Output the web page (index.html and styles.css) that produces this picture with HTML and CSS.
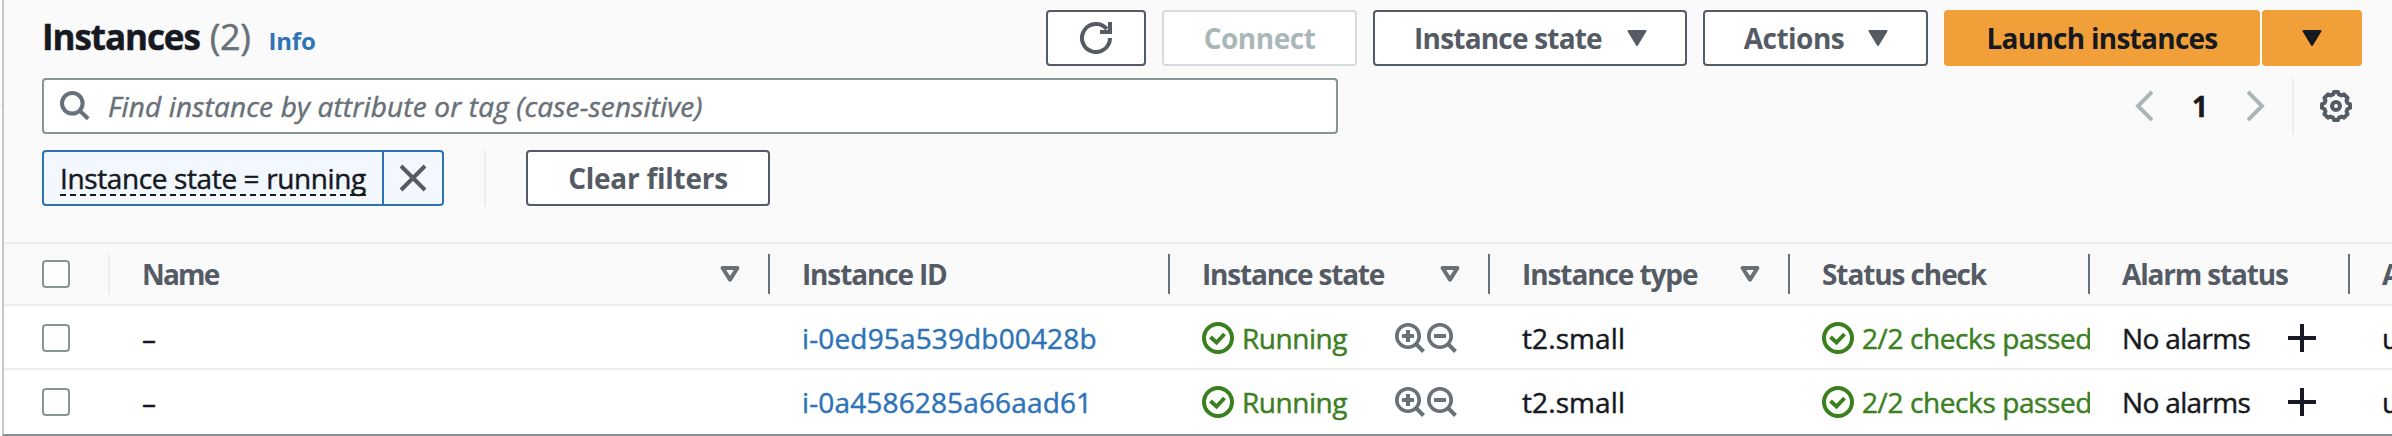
FILE: index.html
```html
<!DOCTYPE html>
<html lang="en">
<head>
<meta charset="utf-8">
<title>Instances</title>
<link rel="stylesheet" href="styles.css">
</head>
<body>
<svg class="sprite" aria-hidden="true">
  <symbol id="i-caret" viewBox="0 0 20 16"><path d="M1.5 1h17L10 15z" fill="currentColor" stroke="currentColor" stroke-width="2" stroke-linejoin="round"/></symbol>
  <symbol id="i-sort" viewBox="0 0 20 16"><path d="M2.6 2h14.8L10 13.6z" fill="none" stroke="currentColor" stroke-width="4" stroke-linejoin="round"/></symbol>
  <symbol id="i-ok" viewBox="0 0 32 32"><circle cx="16" cy="16" r="14" fill="none" stroke="currentColor" stroke-width="4"/><path d="M8.5 15l6 5.5L22.5 12" fill="none" stroke="currentColor" stroke-width="4"/></symbol>
  <symbol id="i-zoom-in" viewBox="0 0 30 30"><circle cx="13" cy="13" r="11.2" fill="none" stroke="currentColor" stroke-width="3.6"/><path d="M20.5 20.5l8 8M7 13h12M13 7v12" fill="none" stroke="currentColor" stroke-width="4"/></symbol>
  <symbol id="i-zoom-out" viewBox="0 0 30 30"><circle cx="13" cy="13" r="11.2" fill="none" stroke="currentColor" stroke-width="3.6"/><path d="M20.5 20.5l8 8M7 13h12" fill="none" stroke="currentColor" stroke-width="4"/></symbol>
  <symbol id="i-plus" viewBox="0 0 28 28"><path d="M14 0v28M0 14h28" stroke="currentColor" stroke-width="4"/></symbol>
</svg>
<div class="page">
  <section class="panel">
    <header class="header">
      <h1 class="title">Instances</h1><span class="count">(2)</span><a class="info">Info</a>
      <div class="actions">
        <button class="btn btn-refresh"><svg width="32" height="32" viewBox="0 0 32 32" fill="none" stroke="currentColor" stroke-width="4"><path d="M30 16a14 14 0 1 1-3.200-8.900M30 0v10H20"/></svg></button>
        <button class="btn btn-connect" disabled>Connect</button>
        <button class="btn btn-state"><span>Instance state</span><svg class="caret"><use href="#i-caret"/></svg></button>
        <button class="btn btn-actions"><span>Actions</span><svg class="caret"><use href="#i-caret"/></svg></button>
        <div class="split">
          <button class="btn btn-primary btn-launch">Launch instances</button>
          <button class="btn btn-primary btn-more"><svg class="caret"><use href="#i-caret"/></svg></button>
        </div>
      </div>
    </header>
    <div class="tools">
      <div class="search">
        <svg width="30" height="30" viewBox="0 0 30 30" fill="none" stroke="currentColor" stroke-width="4"><circle cx="12.3" cy="12.3" r="10.3"/><path d="M19.500 19.500l8.700 8.200"/></svg>
        <span class="placeholder">Find instance by attribute or tag (case-sensitive)</span>
      </div>
      <div class="pager">
        <svg width="18" height="32" viewBox="0 0 18 32" fill="none" stroke="currentColor" stroke-width="4"><path d="M17 2L3 16l14 14"/></svg>
        <span class="page-no">1</span>
        <svg width="18" height="32" viewBox="0 0 18 32" fill="none" stroke="currentColor" stroke-width="4"><path d="M1 2l14 14L1 30"/></svg>
      </div>
      <div class="prefs">
        <svg width="32" height="32" viewBox="0 0 32 32" fill="none" stroke="currentColor"><path stroke-width="4" stroke-linejoin="round" d="M14 2h4l1 2.500 2.500 1L24 4.400 27.600 8l-1.100 2.500 1 2.500 2.500 1v4l-2.500 1-1 2.500 1.100 2.500-3.600 3.600-2.500-1.100-2.500 1-1 2.500h-4l-1-2.500-2.500-1L8 27.600 4.400 24l1.100-2.500-1-2.500L2 18v-4l2.500-1 1-2.500L4.400 8 8 4.400l2.500 1.100 2.500-1z"/><circle cx="16" cy="16" r="4" stroke-width="4"/></svg>
      </div>
    </div>
    <div class="filters">
      <div class="token">
        <div class="token-text"><span>Instance state = running</span></div>
        <div class="token-x"><svg width="28" height="28" viewBox="0 0 28 28" fill="none" stroke="currentColor" stroke-width="4"><path d="M2 2l24 24M26 2L2 26"/></svg></div>
      </div>
      <div class="rule"></div>
      <button class="btn btn-clear">Clear filters</button>
    </div>
    <div class="table">
      <div class="row head">
        <div class="cell sel"><i class="box"></i></div>
        <div class="cell"><span class="t-name">Name</span><svg class="sort"><use href="#i-sort"/></svg></div>
        <div class="cell"><span class="t-id">Instance ID</span></div>
        <div class="cell"><span class="t-state">Instance state</span><svg class="sort"><use href="#i-sort"/></svg></div>
        <div class="cell"><span class="t-type">Instance type</span><svg class="sort"><use href="#i-sort"/></svg></div>
        <div class="cell"><span class="t-check">Status check</span></div>
        <div class="cell"><span class="t-alarm">Alarm status</span></div>
        <div class="cell"><span>Availability Zone</span></div>
      </div>
      <div class="row">
        <div class="cell sel"><i class="box"></i></div>
        <div class="cell">–</div>
        <div class="cell"><a class="id">i-0ed95a539db00428b</a></div>
        <div class="cell"><span class="ok running"><svg class="icon"><use href="#i-ok"/></svg>Running</span><span class="zooms"><svg class="zoom"><use href="#i-zoom-in"/></svg><svg class="zoom"><use href="#i-zoom-out"/></svg></span></div>
        <div class="cell"><span class="type">t2.small</span></div>
        <div class="cell cell-check"><span class="ok checks"><svg class="icon"><use href="#i-ok"/></svg>2/2 checks passed</span></div>
        <div class="cell"><span class="alarms">No alarms</span><svg class="plus"><use href="#i-plus"/></svg></div>
        <div class="cell">us-east-1a</div>
      </div>
      <div class="row">
        <div class="cell sel"><i class="box"></i></div>
        <div class="cell">–</div>
        <div class="cell"><a class="id">i-0a4586285a66aad61</a></div>
        <div class="cell"><span class="ok running"><svg class="icon"><use href="#i-ok"/></svg>Running</span><span class="zooms"><svg class="zoom"><use href="#i-zoom-in"/></svg><svg class="zoom"><use href="#i-zoom-out"/></svg></span></div>
        <div class="cell"><span class="type">t2.small</span></div>
        <div class="cell cell-check"><span class="ok checks"><svg class="icon"><use href="#i-ok"/></svg>2/2 checks passed</span></div>
        <div class="cell"><span class="alarms">No alarms</span><svg class="plus"><use href="#i-plus"/></svg></div>
        <div class="cell">us-east-1a</div>
      </div>
    </div>
  </section>
</div>
</body>
</html>
```

FILE: styles.css
```css
* { box-sizing: border-box; }
body {
  margin: 0;
  width: 2392px;
  height: 436px;
  overflow: hidden;
  background: #fafafa;
  color: #16191f;
  font: 400 28px/36px "Open Sans", "Noto Sans", sans-serif;
  -webkit-text-stroke: .45px currentColor;
}
svg { display: block; flex: none; }
.sprite { position: absolute; width: 0; height: 0; }
.page {
  height: 436px;
  padding-left: 2px;
  overflow: hidden;
  background: linear-gradient(#eaeded, #eaeded) 0 105px / 2px 2px no-repeat #fff;
}
.panel {
  height: 436px;
  border-left: 2px solid #c4c8cb;
  border-bottom: 2px solid #8b8f95;
  background: #fafafa;
  white-space: nowrap;
}

.header {
  display: flex;
  align-items: baseline;
  height: 78px;
  padding: 10px 30px 12px 38px;
}
.title { margin: 0; font-size: 35px; line-height: 54px; font-weight: 700; letter-spacing: -1.07px; }
.count { margin-left: 10px; font-size: 36px; line-height: 54px; color: #687078; letter-spacing: -.4px; }
.info { margin-left: 18px; font-size: 24px; font-weight: 700; color: #2e73b8; letter-spacing: -.17px; -webkit-text-stroke: 0; }
.actions { display: flex; gap: 16px; margin-left: auto; align-self: flex-start; }
.split { display: flex; gap: 2px; }

.btn {
  display: flex;
  align-items: center;
  justify-content: center;
  height: 56px;
  padding: 0;
  border: 2px solid #545b64;
  border-radius: 4px;
  background: #fff;
  color: #545b64;
  font: 700 28px/36px "Open Sans", "Noto Sans", sans-serif;
  -webkit-text-stroke: 0;
}
.btn-refresh { width: 100px; }
.btn-connect { width: 195px; border-color: #d5dbdb; color: #aab7b8; letter-spacing: -.49px; }
.btn-state { width: 314px; gap: 25px; padding-left: 1px; letter-spacing: -.8px; }
.btn-actions { width: 225px; gap: 24px; padding-left: 1px; letter-spacing: -.53px; }
.btn-primary { border-color: #f19f38; background: #f19f38; color: #16191f; }
.btn-launch { width: 316px; letter-spacing: -.73px; }
.btn-more { width: 100px; }
.btn-clear { width: 244px; letter-spacing: -.27px; }
.caret { width: 20px; height: 16px; }

.tools { display: flex; height: 56px; padding: 0 28px 0 38px; }
.search {
  display: flex;
  align-items: center;
  width: 1296px;
  padding-left: 16px;
  border: 2px solid #879596;
  border-radius: 4px;
  background: #fff;
  color: #687078;
}
.placeholder { margin-left: 18px; font-style: italic; letter-spacing: .16px; }
.pager { display: flex; align-items: center; margin-left: auto; color: #aab7b8; }
.page-no { width: 94px; text-align: center; color: #16191f; font-weight: 700; }
.prefs { display: flex; align-items: center; margin-left: 27px; padding: 0 12px 0 26px; border-left: 2px solid #eaeded; color: #545b64; }

.filters { display: flex; height: 108px; padding: 16px 0 36px 38px; }
.token { display: flex; width: 402px; height: 56px; border: 2px solid #2e73b8; border-radius: 4px; background: #f2f8fd; }
.token-text { flex: 1; padding: 6px 0 0 16px; }
.token-text span { display: block; width: 306px; height: 38px; line-height: 40px; border-bottom: 2px dashed #16191f; letter-spacing: -.38px; }
.token-x { display: flex; align-items: center; justify-content: center; width: 60px; border-left: 2px solid #2e73b8; color: #545b64; }
.rule { width: 2px; height: 56px; margin: 0 40px; background: #eaeded; }

.table { border-top: 2px solid #eaeded; }
.row {
  display: grid;
  grid-template-columns: 106px 660px 400px 320px 300px 300px 260px 260px;
  height: 64px;
  border-bottom: 2px solid #eaeded;
  background: #fff;
}
.row:last-child { border-bottom: 0; }
.cell { display: flex; align-items: center; min-width: 0; padding: 2px 30px 0 32px; overflow: hidden; }
.row:last-child .cell { padding-top: 0; }
.cell.sel { padding-left: 38px; }
.box { width: 28px; height: 28px; border: 2px solid #879596; border-radius: 4px; background: #fff; }

.head { height: 62px; background: #fafafa; color: #545b64; font-weight: 700; -webkit-text-stroke: 0; }
.head .cell { height: 40px; margin-top: 10px; padding-top: 0; padding-right: 28px; border-right: 2px solid #687078; }
.head .cell.sel { border-color: #eaeded; }
.sort { width: 20px; height: 16px; margin-left: auto; color: #687078; }
.t-name { letter-spacing: -1.8px; }
.t-id { letter-spacing: -1.15px; }
.t-state { letter-spacing: -1.2px; }
.t-type { letter-spacing: -1.09px; }
.t-check { letter-spacing: -1.1px; }
.t-alarm { letter-spacing: -1.16px; }

.id { color: #2e73b8; letter-spacing: .14px; }
.ok { display: flex; align-items: center; gap: 8px; color: #3b7f1f; }
.ok .icon { width: 32px; height: 32px; }
.running { letter-spacing: -.45px; }
.cell-check { padding-right: 0; }
.checks { letter-spacing: -.4px; }
.zooms { display: flex; gap: 2px; margin-left: auto; padding-right: 3px; color: #687078; }
.zoom { width: 30px; height: 30px; }
.type { letter-spacing: .1px; }
.alarms { letter-spacing: -.65px; }
.plus { width: 28px; height: 28px; margin: 0 4px 0 auto; }
```
